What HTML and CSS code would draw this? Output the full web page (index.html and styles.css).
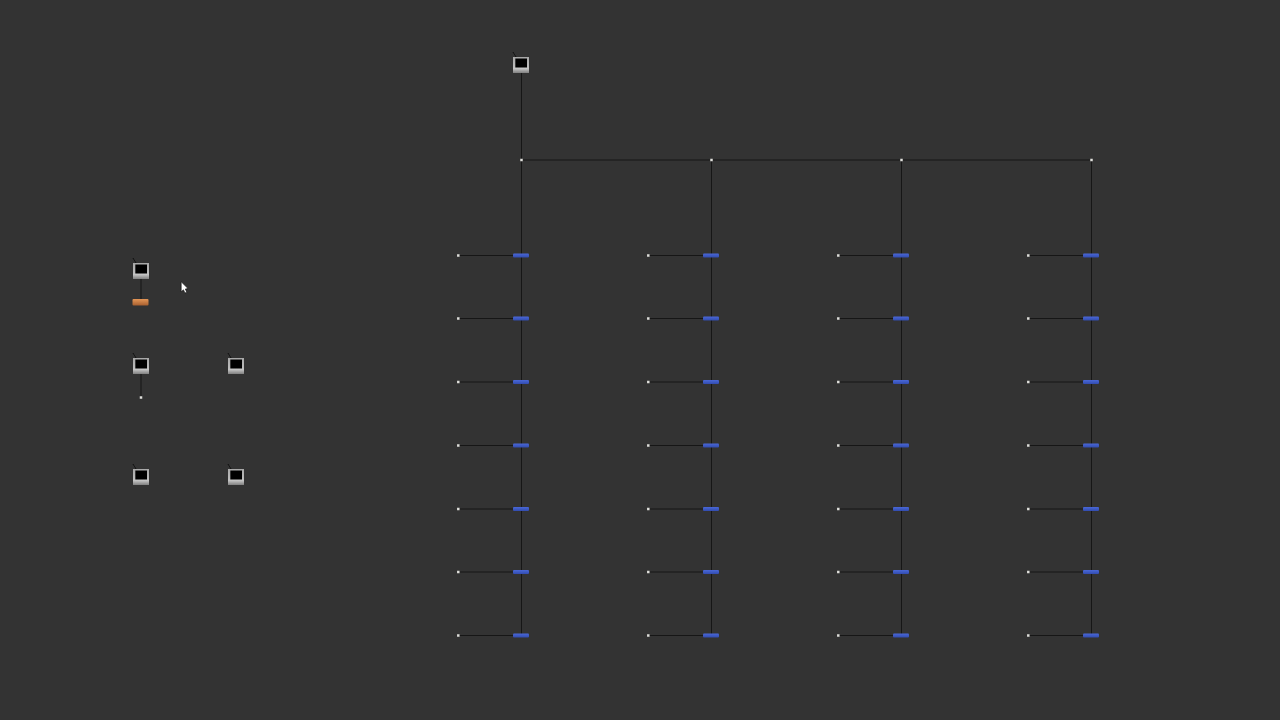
FILE: index.html
```html
<!DOCTYPE html>
<html lang="en">
<head>
<meta charset="utf-8">
<title>Node graph</title>
<link rel="stylesheet" href="styles.css">
</head>
<body>
<svg class="canvas" width="1280" height="720" viewBox="0 0 1280 720" xmlns="http://www.w3.org/2000/svg">
  <defs>
    <filter id="soften" x="0" y="0" width="1280" height="720" filterUnits="userSpaceOnUse">
      <feGaussianBlur stdDeviation="0.45"/>
    </filter>
    <linearGradient id="nodeBody" x1="0" y1="0" x2="0" y2="1">
      <stop offset="0" stop-color="#a8a8a8"/>
      <stop offset="0.6" stop-color="#bcbcbc"/>
      <stop offset="0.72" stop-color="#c4c4c4"/>
      <stop offset="1" stop-color="#808080"/>
    </linearGradient>
    <linearGradient id="bluePlug" x1="0" y1="0" x2="0" y2="1">
      <stop offset="0" stop-color="#4a68d8"/>
      <stop offset="1" stop-color="#324cae"/>
    </linearGradient>
    <linearGradient id="orangePlug" x1="0" y1="0" x2="0" y2="1">
      <stop offset="0" stop-color="#e49656"/>
      <stop offset="1" stop-color="#a86030"/>
    </linearGradient>
    <g id="node">
      <path class="wire" d="M-8 -13 L-5 -8"/>
      <rect x="-8" y="-8" width="16" height="16" fill="url(#nodeBody)"/>
      <rect x="-5.700" y="-6.500" width="11.700" height="9" fill="#050505"/>
    </g>
    <rect id="dot" class="dot" x="-1.250" y="-1.250" width="2.500" height="2.500"/>
    <g id="row">
      <path class="wire" d="M-63 0.500 H0"/>
      <use href="#dot" x="-62.700" y="0.500"/>
      <rect class="plug-blue" x="-8" y="-1.500" width="16" height="4" rx="1"/>
    </g>
    <g id="column">
      <path class="wire" d="M0.500 160 V636"/>
      <use href="#dot" x="0.500" y="160"/>
      <use href="#row" y="255"/>
      <use href="#row" y="318"/>
      <use href="#row" y="381.500"/>
      <use href="#row" y="445"/>
      <use href="#row" y="508.500"/>
      <use href="#row" y="571.500"/>
      <use href="#row" y="635"/>
    </g>
  </defs>

  <g filter="url(#soften)">
    <path class="wire" d="M521.500 65 V160 M521 160 H1091"/>
    <use href="#column" x="521"/>
    <use href="#column" x="711"/>
    <use href="#column" x="901"/>
    <use href="#column" x="1091"/>
    <use href="#node" x="521" y="65"/>

    <path class="wire" d="M141 271 V302 M141 366 V397"/>
    <rect class="plug-orange" x="132.500" y="299" width="16" height="6.500" rx="1"/>
    <use href="#dot" x="141" y="397.500"/>
    <use href="#node" x="141" y="271"/>
    <use href="#node" x="141" y="366"/>
    <use href="#node" x="236" y="366"/>
    <use href="#node" x="141" y="477"/>
    <use href="#node" x="236" y="477"/>

    <path class="cursor" d="M181.200 281.800 V291.800 L183.400 289.800 L185 293 L186.800 292.200 L185.300 289 L188 288.600 Z"/>
  </g>
</svg>
</body>
</html>
```

FILE: styles.css
```css
html, body {
  margin: 0;
  padding: 0;
  width: 1280px;
  height: 720px;
  overflow: hidden;
  background: #333333;
}

.canvas {
  display: block;
}

.wire {
  fill: none;
  stroke: #141414;
  stroke-width: 1;
}

.dot {
  fill: #e0e0dc;
}

.plug-blue {
  fill: url(#bluePlug);
}

.plug-orange {
  fill: url(#orangePlug);
}

.cursor {
  fill: #ffffff;
  stroke: #111111;
  stroke-width: 0.6;
}
```
